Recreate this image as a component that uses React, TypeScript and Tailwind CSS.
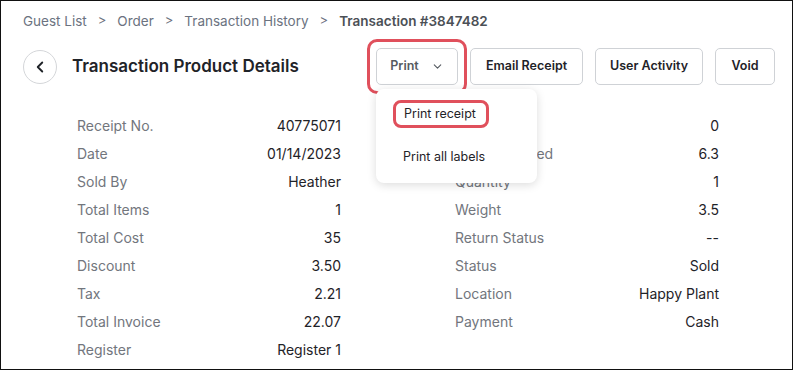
import { ChevronDown, ChevronLeft } from "lucide-react";

const LEFT_ROWS = [
  { label: "Receipt No.", value: "40775071" },
  { label: "Date", value: "01/14/2023" },
  { label: "Sold By", value: "Heather" },
  { label: "Total Items", value: "1" },
  { label: "Total Cost", value: "35" },
  { label: "Discount", value: "3.50" },
  { label: "Tax", value: "2.21" },
  { label: "Total Invoice", value: "22.07" },
  { label: "Register", value: "Register 1" },
];

const RIGHT_ROWS = [
  { label: "Product ID", value: "0" },
  { label: "Units Returned", value: "6.3" },
  { label: "Quantity", value: "1" },
  { label: "Weight", value: "3.5" },
  { label: "Return Status", value: "--" },
  { label: "Status", value: "Sold" },
  { label: "Location", value: "Happy Plant" },
  { label: "Payment", value: "Cash" },
];

const CRUMBS = ["Guest List", "Order", "Transaction History"];

function DetailColumn({ rows }: { rows: { label: string; value: string }[] }) {
  return (
    <div className="flex flex-col">
      {rows.map((r) => (
        <div key={r.label} className="h-[28px] flex items-center justify-between text-[14px]">
          <span className="text-[#72767d]">{r.label}</span>
          <span className="text-[#1f2328]">{r.value}</span>
        </div>
      ))}
    </div>
  );
}

export default function App() {
  return (
    <div className="w-[793px] h-[370px] border-[1.5px] border-[#111] bg-white relative overflow-hidden font-['Inter',sans-serif]">
      {/* Breadcrumb */}
      <div className="pl-[22px] pt-[11px] h-[29px] flex items-center text-[13.5px] text-[#6b7280]">
        {CRUMBS.map((c) => (
          <span key={c} className="flex items-center">
            <span>{c}</span>
            <span className="mx-[11px] text-[13px]">&gt;</span>
          </span>
        ))}
        <span className="font-semibold text-[#4b5056]">Transaction #3847482</span>
      </div>

      {/* Header */}
      <div className="mt-[18px] pl-[22px] pr-[17px] flex items-center h-[37px]">
        <button className="w-[34px] h-[34px] rounded-full border border-[#d4d6d9] flex items-center justify-center text-[#1f2328]">
          <ChevronLeft size={18} strokeWidth={2.5} />
        </button>
        <h1 className="ml-[15px] text-[17px] font-semibold text-[#1f2328]">Transaction Product Details</h1>

        <div className="ml-auto flex items-center gap-3">
          <div className="relative">
            <button className="h-[37px] w-[82px] rounded-[5px] border border-[#cfd2d6] flex items-center justify-center gap-[12px] text-[12.5px] font-semibold text-[#555a60]">
              Print
              <ChevronDown size={13} strokeWidth={2} />
            </button>
            <div className="absolute -inset-[9px] rounded-[10px] border-[3px] border-[#e0505c] pointer-events-none" />

            {/* Dropdown */}
            <div className="absolute left-0 top-[41px] w-[161px] h-[94px] bg-white rounded-[8px] shadow-[0_2px_10px_rgba(0,0,0,0.14)] z-10 flex flex-col text-[12.5px] text-[#1f2328]">
              <div className="relative ml-[28px] mt-[17px] h-[16px] flex items-center">
                Print receipt
                <div className="absolute -left-[11px] -top-[6px] w-[96px] h-[28px] rounded-[8px] border-[3px] border-[#e0505c]" />
              </div>
              <div className="ml-[27px] mt-[27px] h-[16px] flex items-center">Print all labels</div>
            </div>
          </div>
          <button className="h-[37px] w-[113px] rounded-[5px] border border-[#cfd2d6] text-[12.5px] font-semibold text-[#1f2328]">
            Email Receipt
          </button>
          <button className="h-[37px] w-[108px] rounded-[5px] border border-[#cfd2d6] text-[12.5px] font-semibold text-[#1f2328]">
            User Activity
          </button>
          <button className="h-[37px] w-[60px] rounded-[5px] border border-[#cfd2d6] text-[12.5px] font-semibold text-[#1f2328]">
            Void
          </button>
        </div>
      </div>

      {/* Details */}
      <div className="mt-[26px] pl-[76px] grid grid-cols-[264px_264px] gap-x-[114px]">
        <DetailColumn rows={LEFT_ROWS} />
        <DetailColumn rows={RIGHT_ROWS} />
      </div>
    </div>
  );
}
